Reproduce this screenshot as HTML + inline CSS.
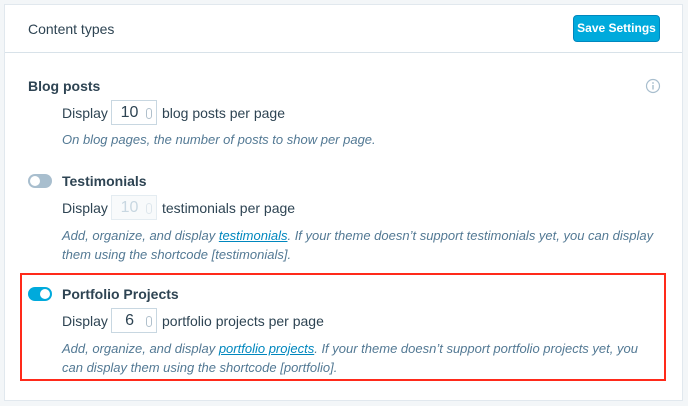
<!DOCTYPE html><html><head><style>
body{margin:0;width:688px;height:406px;background:#f3f6f8;font-family:"Liberation Sans",sans-serif;position:relative;overflow:hidden}
.card{position:absolute;left:4px;top:4px;width:677px;height:395px;background:#fff;border:1px solid #e1e8ee}
.hdr{position:absolute;left:0;top:0;width:677px;height:47px;border-bottom:1px solid #d8e2e9}
.a{position:absolute;white-space:nowrap}
.t{font-size:14px;color:#2e4453}
.b{font-size:14px;font-weight:bold;color:#2e4453}
.i{font-size:13px;font-style:italic;color:#537994}
.i u{color:#0087be}
.in{position:absolute;width:46px;height:25px;border:1px solid #c8d7e1;box-sizing:border-box;font-size:16px;color:#2e4453;text-align:center;line-height:23px}
.in span{position:absolute;right:4px;top:7px;width:4px;height:9px;border:1px solid #b0c0cc;border-radius:3px;font-size:0}
.tog{position:absolute;width:24px;height:14px;border-radius:8px}
.tog i{position:absolute;top:2px;width:10px;height:10px;border-radius:50%;background:#fff}
</style></head><body>
<div class="card">
<div class="hdr"></div>
</div>
<div class="a" style="left:28px;top:21px;font-size:14px;color:#2e4453">Content types</div>
<div class="a" style="left:573px;top:15px;width:87px;height:27px;background:#00aadc;border:1px solid #0087be;border-radius:4px;box-sizing:border-box;color:#fff;font-weight:bold;font-size:12px;text-align:center;line-height:25px">Save Settings</div>
<svg class="a" style="left:645px;top:78px" width="16" height="16" viewBox="0 0 16 16"><circle cx="8" cy="8" r="6.5" fill="none" stroke="#a8bece" stroke-width="1.2"/><rect x="7.3" y="7" width="1.4" height="4.5" fill="#a8bece"/><circle cx="8" cy="5" r="0.9" fill="#a8bece"/></svg>

<div class="a b" style="left:28px;top:78px">Blog posts</div>
<div class="a t" style="left:62px;top:105px">Display</div>
<div class="in" style="left:111px;top:100px">10&nbsp;&nbsp;<span></span></div>
<div class="a t" style="left:162px;top:105px">blog posts per page</div>
<div class="a i" style="left:62px;top:132px">On blog pages, the number of posts to show per page.</div>

<div class="tog" style="left:28px;top:174px;background:#a8bece"><i style="left:2px"></i></div>
<div class="a b" style="left:62px;top:173px">Testimonials</div>
<div class="a t" style="left:62px;top:200px">Display</div>
<div class="in" style="left:111px;top:195px;color:#c8d7e1;background:#f8fafb;border-color:#e4ecf1">10&nbsp;&nbsp;<span style="border-color:#dde6ec"></span></div>
<div class="a t" style="left:162px;top:200px">testimonials per page</div>
<div class="a i" style="left:62px;top:226px;line-height:19px">Add, organize, and display <u>testimonials</u>. If your theme doesn’t support testimonials yet, you can display<br>them using the shortcode [testimonials].</div>

<div class="a" style="left:20px;top:273px;width:642px;height:104px;border:2px solid #ff2a1a"></div>
<div class="tog" style="left:28px;top:287px;background:#00aadc"><i style="left:12px"></i></div>
<div class="a b" style="left:62px;top:286px">Portfolio Projects</div>
<div class="a t" style="left:62px;top:313px">Display</div>
<div class="in" style="left:111px;top:308px">6&nbsp;&nbsp;<span></span></div>
<div class="a t" style="left:162px;top:313px">portfolio projects per page</div>
<div class="a i" style="left:62px;top:339px;line-height:19px">Add, organize, and display <u>portfolio projects</u>. If your theme doesn’t support portfolio projects yet, you<br>can display them using the shortcode [portfolio].</div>
</body></html>
